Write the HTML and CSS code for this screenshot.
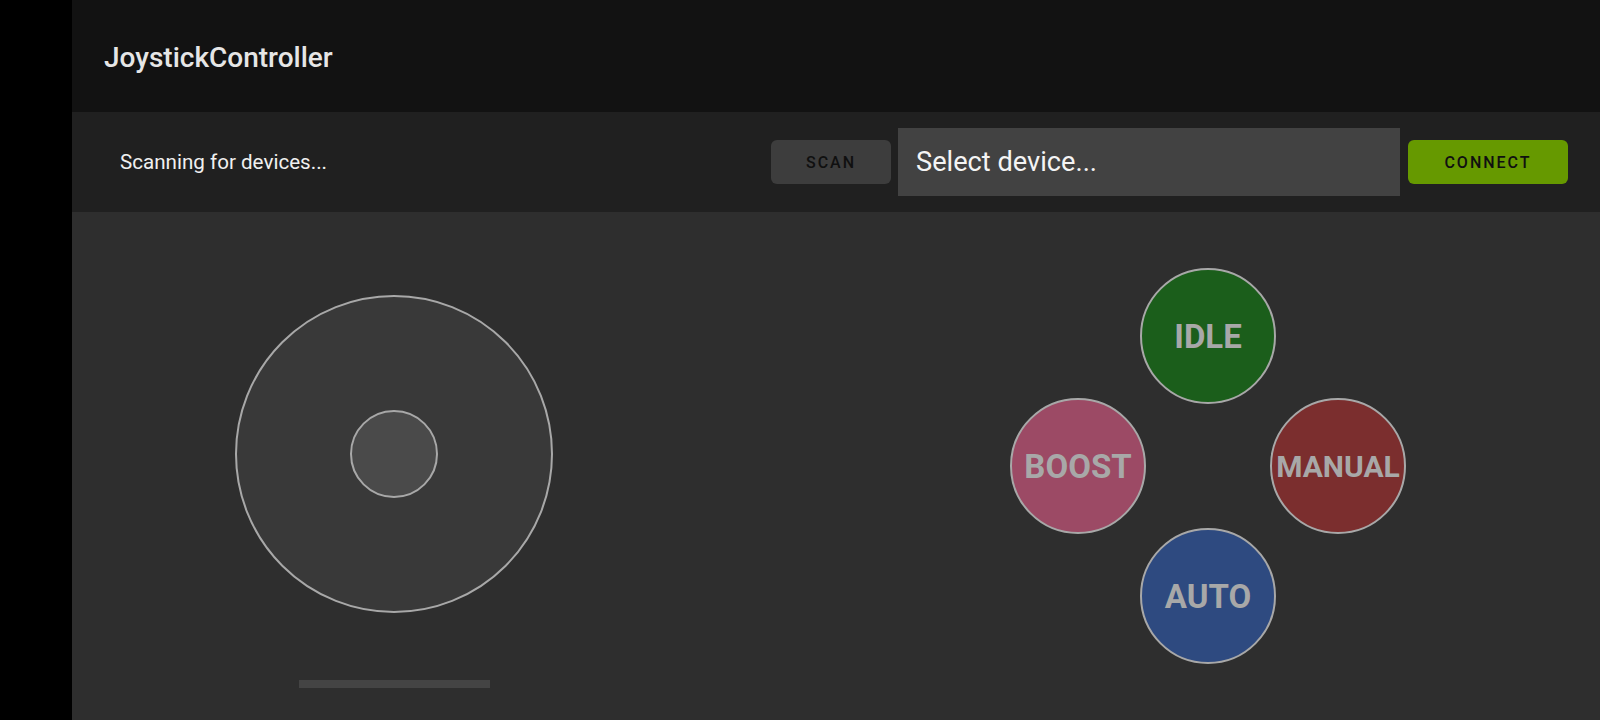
FILE: index.html
```html
<!DOCTYPE html>
<html>
<head>
<meta charset="utf-8">
<link rel="stylesheet" href="styles.css">
</head>
<body>
<div class="app">
  <div class="sidebar"></div>
  <div class="main">
    <header class="appbar"><span class="title">JoystickController</span></header>
    <div class="toolbar">
      <span class="status">Scanning for devices...</span>
      <button class="btn btn-scan">SCAN</button>
      <div class="select">Select device...</div>
      <button class="btn btn-connect">CONNECT</button>
    </div>
    <div class="content">
      <div class="stick-panel">
        <div class="stick-base"><div class="stick-knob"></div></div>
        <div class="stick-bar"></div>
      </div>
      <div class="pad">
        <div class="mode mode-idle">IDLE</div>
        <div class="mode mode-boost">BOOST</div>
        <div class="mode mode-manual">MANUAL</div>
        <div class="mode mode-auto">AUTO</div>
      </div>
    </div>
  </div>
</div>
</body>
</html>
```
FILE: styles.css
```css
html, body {
  margin: 0;
  padding: 0;
  width: 1600px;
  height: 720px;
  overflow: hidden;
  background: #000;
  font-family: Roboto, "Liberation Sans", sans-serif;
}
.app {
  display: flex;
  width: 1600px;
  height: 720px;
}
.sidebar {
  width: 72px;
  flex: none;
  background: #000;
}
.main {
  flex: 1;
  display: flex;
  flex-direction: column;
  background: #2e2e2e;
}
.appbar {
  height: 112px;
  flex: none;
  background: #121212;
  display: flex;
  align-items: center;
  padding-left: 32px;
  box-sizing: border-box;
}
.title {
  color: #e6e6e6;
  font-size: 28px;
  font-weight: 500;
  position: relative;
  top: 1px;
}
.toolbar {
  height: 100px;
  flex: none;
  background: #202020;
  display: flex;
  align-items: center;
  padding: 0 32px 0 48px;
  box-sizing: border-box;
}
.status {
  flex: 1;
  color: #f0f0f0;
  font-size: 20.6px;
}
.btn {
  border: none;
  height: 44px;
  border-radius: 6px;
  font-family: Roboto, "Liberation Sans", sans-serif;
  font-size: 16px;
  font-weight: 500;
  letter-spacing: 2px;
  color: #101010;
  padding: 0;
}
.btn-scan {
  width: 120px;
  background: #3d3d3d;
}
.select {
  width: 502px;
  height: 68px;
  margin: 0 8px 0 7px;
  background: #424242;
  color: #f4f4f4;
  font-size: 27.2px;
  display: flex;
  align-items: center;
  padding-left: 18px;
  box-sizing: border-box;
}
.btn-connect {
  width: 160px;
  background: #669900;
}
.content {
  flex: 1;
  display: flex;
}
.stick-panel {
  width: 644px;
  display: flex;
  flex-direction: column;
  align-items: center;
  padding-top: 83px;
  box-sizing: border-box;
}
.stick-base {
  width: 318px;
  height: 318px;
  border-radius: 50%;
  border: 2px solid #a8a8a8;
  background: #393939;
  box-sizing: border-box;
  display: flex;
  align-items: center;
  justify-content: center;
}
.stick-knob {
  width: 88px;
  height: 88px;
  border-radius: 50%;
  border: 2px solid #a8a8a8;
  background: #4a4a4a;
  box-sizing: border-box;
}
.stick-bar {
  width: 191px;
  height: 8px;
  margin-top: 67px;
  background: #444444;
}
.pad {
  margin: 59px 0 0 297px;
  display: grid;
  grid-template-columns: repeat(3, 130px);
  grid-template-rows: repeat(3, 130px);
  width: 390px;
  height: 390px;
}
.mode {
  width: 136px;
  height: 136px;
  margin: -3px;
  border-radius: 50%;
  border: 2px solid #a8a8a8;
  box-sizing: border-box;
  display: flex;
  align-items: center;
  justify-content: center;
  color: #a8a8a8;
  font-size: 33px;
  font-weight: 700;
}
.mode-idle { grid-column: 2; grid-row: 1; background: #1b5e1b; }
.mode-boost { grid-column: 1; grid-row: 2; background: #9c4a65; }
.mode-manual { grid-column: 3; grid-row: 2; background: #7b2e2e; font-size: 30px; }
.mode-auto { grid-column: 2; grid-row: 3; background: #2e4a80; }
```
